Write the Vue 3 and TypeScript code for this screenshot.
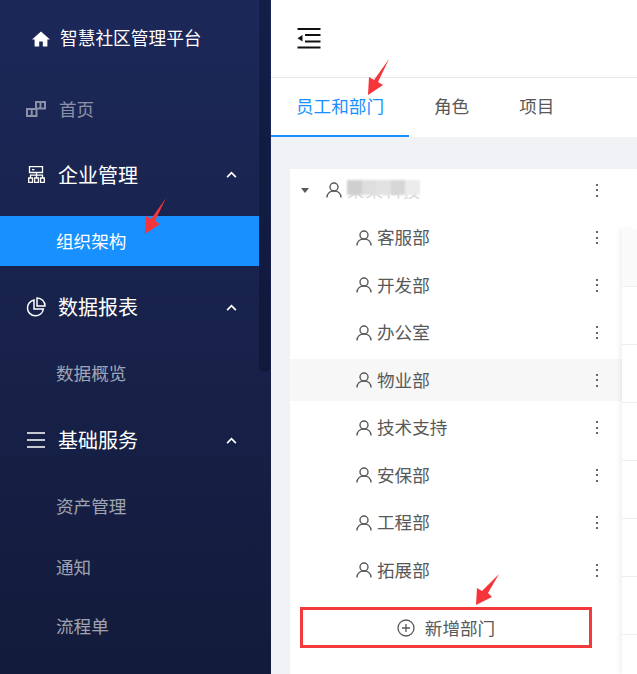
<script setup lang="ts">
interface Dept {
  name: string
  hover?: boolean
}

const depts: Dept[] = [
  { name: '客服部' },
  { name: '开发部' },
  { name: '办公室' },
  { name: '物业部', hover: true },
  { name: '技术支持' },
  { name: '安保部' },
  { name: '工程部' },
  { name: '拓展部' },
]

const tableRows = 6
const mosaic = ['#cfcfcf', '#dedede', '#e2e2e2', '#d6d6d6', '#ececec']
</script>

<template>
  <div class="page">
    <aside class="side">
      <div class="logo">
        <svg class="logo-icon" viewBox="0 0 18 16" width="18" height="16">
          <path d="M9 0.5 L18 8.5 H15.4 V15.5 H10.8 V10.5 H7.2 V15.5 H2.6 V8.5 H0 Z" fill="#fff" />
        </svg>
        <span>智慧社区管理平台</span>
      </div>

      <nav class="menu">
        <a class="item item-dim">
          <svg class="item-icon" viewBox="0 0 20 16" width="20" height="16" fill="none" stroke="#8c90a8" stroke-width="2">
            <path d="M10 1 H19 V7.5 H10 Z M14.5 1 V7.5 M1 8 H10.5 V15 H1 Z M5.7 8 V15" />
          </svg>
          <span>首页</span>
        </a>

        <a class="item item-group">
          <svg class="item-icon icon-org" viewBox="0 0 17 17" width="17" height="17" fill="none" stroke="#fff" stroke-width="1.3">
            <path d="M1.5 0.7 H14.5 V6.5 H1.5 Z M8.5 6.5 V12 M2.5 12 V9.2 H14.5 V12" />
            <path d="M0.7 12 H4.5 V16.3 H0.7 Z M6.6 12 H10.4 V16.3 H6.6 Z M12.5 12 H16.3 V16.3 H12.5 Z" />
            <path d="M4 3.6 H6.5" />
          </svg>
          <span class="item-text">企业管理</span>
          <svg class="chev" viewBox="0 0 12 8" width="11" height="7" fill="none" stroke="#fff" stroke-width="2"><path d="M1 7 L6 2 L11 7" /></svg>
        </a>
        <a class="item item-active"><span>组织架构</span></a>

        <a class="item item-group">
          <svg class="item-icon" viewBox="0 0 20 20" width="20" height="20" fill="none" stroke="#fff" stroke-width="1.5">
            <path d="M8 3 A8 8 0 1 0 17.4 12 H8 Z" />
            <path d="M11 1 A8 8 0 0 1 19 9 H11 Z" />
          </svg>
          <span class="item-text">数据报表</span>
          <svg class="chev" viewBox="0 0 12 8" width="11" height="7" fill="none" stroke="#fff" stroke-width="2"><path d="M1 7 L6 2 L11 7" /></svg>
        </a>
        <a class="item item-sub"><span>数据概览</span></a>

        <a class="item item-group">
          <svg class="item-icon icon-bars" viewBox="0 0 18 16" width="18" height="16" fill="none" stroke="#fff" stroke-width="1.6">
            <path d="M0 1 H18 M0 8 H18 M0 15 H18" />
          </svg>
          <span class="item-text">基础服务</span>
          <svg class="chev" viewBox="0 0 12 8" width="11" height="7" fill="none" stroke="#fff" stroke-width="2"><path d="M1 7 L6 2 L11 7" /></svg>
        </a>
        <a class="item item-sub"><span>资产管理</span></a>
        <a class="item item-sub item-near"><span>通知</span></a>
        <a class="item item-sub item-nearer"><span>流程单</span></a>
      </nav>

      <div class="thumb"></div>
    </aside>

    <main class="main">
      <header class="top">
        <svg viewBox="0 0 24 21" width="24" height="21" fill="#111">
          <path d="M0.5 0 H23.5 V2 H0.5 Z M8 6 H23.5 V8 H8 Z M8 12.5 H23.5 V14.5 H8 Z M0.5 18.5 H23.5 V20.5 H0.5 Z M0.5 10.3 L5.5 7 V13.6 Z" />
        </svg>
      </header>

      <div class="tabs">
        <a class="tab tab-active">员工和部门</a>
        <a class="tab">角色</a>
        <a class="tab">项目</a>
      </div>

      <section class="body">
        <div class="panel">
          <div class="tree">
            <div class="row row-root">
              <span class="caret"></span>
              <svg class="person" viewBox="0 0 16 16" width="16" height="16" fill="none" stroke="#595959" stroke-width="1.4">
                <circle cx="8" cy="5" r="4" />
                <path d="M1 15.5 C1 11.5 4 9 8 9 C12 9 15 11.5 15 15.5" />
              </svg>
              <span class="name name-hidden">
                某某科技
                <span class="mask">
                  <i v-for="(c, i) in mosaic" :key="i" :style="{ background: c }"></i>
                </span>
              </span>
              <span class="dots"><i></i><i></i><i></i></span>
            </div>

            <div
              v-for="d in depts"
              :key="d.name"
              class="row row-child"
              :class="{ 'row-hover': d.hover }"
            >
              <svg class="person" viewBox="0 0 16 16" width="16" height="16" fill="none" stroke="#595959" stroke-width="1.4">
                <circle cx="8" cy="5" r="4" />
                <path d="M1 15.5 C1 11.5 4 9 8 9 C12 9 15 11.5 15 15.5" />
              </svg>
              <span class="name">{{ d.name }}</span>
              <span class="dots"><i></i><i></i><i></i></span>
            </div>

            <button class="add" type="button">
              <svg viewBox="0 0 18 18" width="18" height="18" fill="none" stroke="#595959" stroke-width="1.3">
                <circle cx="9" cy="9" r="8" />
                <path d="M9 5 V13 M5 9 H13" />
              </svg>
              <span>新增部门</span>
            </button>
          </div>

          <div class="table">
            <div class="thead"></div>
            <div v-for="n in tableRows" :key="n" class="trow"></div>
          </div>
        </div>
      </section>
    </main>

    <!-- 标注箭头 -->
    <svg class="mark mark-side" viewBox="0 0 22 37" width="22" height="37"><path d="M21 0 L10 23 L15 26 L0 36 L1 18 L6 21 Z" fill="#f5353a" /></svg>
    <svg class="mark mark-tab" viewBox="0 0 22 37" width="22" height="37"><path d="M21 0 L10 23 L15 26 L0 36 L1 18 L6 21 Z" fill="#f5353a" /></svg>
    <svg class="mark mark-add" viewBox="0 0 24 32" width="24" height="32"><path d="M23 0 L12 19 L16 23 L0 31 L1 14 L6 17 Z" fill="#f5353a" /></svg>
  </div>
</template>

<style>
html,
body {
  margin: 0;
  overflow: hidden;
}
</style>

<style scoped>
.page {
  position: relative;
  display: flex;
  width: 637px;
  height: 674px;
  overflow: hidden;
  font-family: "Noto Sans CJK SC", "Liberation Sans", sans-serif;
  font-size: 17.6px;
}

.side {
  position: relative;
  flex: 0 0 271px;
  padding-right: 12px;
  box-sizing: border-box;
  background: linear-gradient(180deg, #1c2859 0%, #131b3b 100%);
}

.logo {
  display: flex;
  align-items: center;
  gap: 10px;
  height: 77px;
  padding-left: 32px;
  color: #fff;
  font-size: 17.7px;
}

.logo span {
  padding-bottom: 3px;
}

.logo-icon {
  flex: none;
}

.menu {
  display: flex;
  flex-direction: column;
  padding-top: 6.6px;
}

.item {
  display: flex;
  align-items: center;
  height: 50px;
  padding-left: 56px;
  margin-bottom: 16.3px;
  line-height: 1;
}

.item-dim {
  padding-left: 26px;
  color: rgba(255, 255, 255, 0.5);
}

.item-dim span {
  margin-left: 13px;
}

.item-group {
  padding-left: 26px;
  color: #fff;
  font-size: 20px;
}

.item-icon {
  flex: none;
}

.icon-org {
  margin: 0 1px 0 2px;
}

.icon-bars {
  margin: 0 1px;
}

.item-text {
  margin-left: 12px;
}

.chev {
  margin-left: auto;
  margin-right: 22px;
}

.item-active {
  background: #1890ff;
  color: #fff;
}

.item-sub {
  color: rgba(255, 255, 255, 0.6);
}

.item-sub span {
  padding-bottom: 2px;
}

.item-near {
  margin-top: -5.3px;
}

.item-nearer {
  margin-top: -7.3px;
}

.thumb {
  position: absolute;
  top: 0;
  left: 259px;
  width: 11px;
  height: 372px;
  border-radius: 0 0 6px 6px;
  background: rgba(6, 12, 38, 0.35);
}

.main {
  flex: 1;
  display: flex;
  flex-direction: column;
  min-width: 0;
  background: #f0f2f5;
}

.top {
  display: flex;
  align-items: center;
  height: 77px;
  padding-left: 26px;
  background: #fff;
  border-bottom: 1px solid #e8e8e8;
}

.tabs {
  display: flex;
  height: 59px;
  background: #fff;
}

.tab {
  display: flex;
  align-items: center;
  height: 55px;
  padding: 0 25px 2px;
  color: #595959;
  border-bottom: 2px solid transparent;
}

.tab-active {
  color: #1890ff;
  border-bottom-color: #1890ff;
}

.body {
  flex: 1;
  padding: 32px 0 0 19px;
  min-height: 0;
}

.panel {
  display: flex;
  height: 100%;
  background: #fff;
}

.tree {
  flex: 0 0 332px;
  display: flex;
  flex-direction: column;
  gap: 5.5px;
}

.row {
  display: flex;
  align-items: center;
  height: 42px;
  flex: none;
  color: #595959;
}

.row-root {
  padding-left: 11px;
}

.row-child {
  padding-left: 66px;
}

.row-hover {
  background: #f7f7f7;
}

.caret {
  width: 0;
  height: 0;
  margin-right: 17px;
  border-style: solid;
  border-width: 5px 4px 0;
  border-color: #595959 transparent transparent;
}

.person {
  flex: none;
}

.name {
  margin-left: 5px;
  padding-bottom: 2px;
}

.name-hidden {
  position: relative;
  color: #d8d8d8;
  letter-spacing: 1px;
}

.mask {
  position: absolute;
  top: 3px;
  left: 0;
  display: flex;
  width: 73px;
  height: 15px;
  filter: blur(0.8px);
}

.mask i {
  flex: 1;
}

.dots {
  margin-left: auto;
  margin-right: 24px;
  display: flex;
  flex-direction: column;
  gap: 3.5px;
}

.dots i {
  display: block;
  width: 2px;
  height: 2px;
  background: #666;
}

.add {
  display: flex;
  align-items: center;
  justify-content: center;
  gap: 10px;
  width: 292px;
  height: 41px;
  margin: 10.5px 0 0 10px;
  padding: 0;
  box-sizing: border-box;
  background: #fff;
  border: 3px solid #f23a3c;
  color: #595959;
  font: inherit;
}

.table {
  flex: 1;
  margin-top: 60px;
  background: #fff;
  box-shadow: -3px 0 4px rgba(0, 0, 0, 0.05);
}

.thead {
  height: 57px;
  background: #fafafa;
  border-bottom: 1px solid #eee;
}

.trow {
  height: 57px;
  border-bottom: 1px solid #eee;
}

.mark {
  position: absolute;
}

.mark-side {
  left: 145px;
  top: 198px;
}

.mark-tab {
  left: 368px;
  top: 59px;
}

.mark-add {
  left: 476px;
  top: 574px;
}
</style>
